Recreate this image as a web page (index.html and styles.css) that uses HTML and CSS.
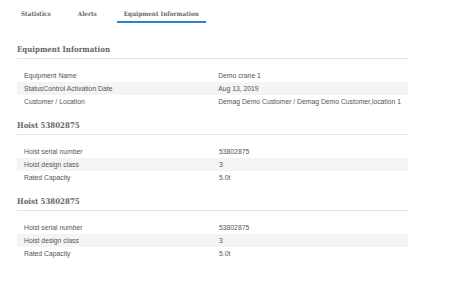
FILE: index.html
```html
<!DOCTYPE html>
<html lang="en">
<head>
  <meta charset="UTF-8">
  <title>Equipment Information</title>
  <link rel="stylesheet" href="styles.css">
</head>
<body>
  <div class="tabs">
    <div class="tab">Statistics</div>
    <div class="tab">Alerts</div>
    <div class="tab active">Equipment Information</div>
  </div>

  <div class="content">
    <!-- Equipment -->
    <div class="section">
      <h2>Equipment Information</h2>
      <table>
        <tr><td>Equipment Name</td><td>Demo crane 1</td></tr>
        <tr><td>StatusControl Activation Date</td><td>Aug 13, 2019</td></tr>
        <tr><td>Customer / Location</td><td>Demag Demo Customer / Demag Demo Customer,location 1</td></tr>
      </table>
    </div>

    <!-- Hoists -->
    <div class="section">
      <h2>Hoist 53802875</h2>
      <table>
        <tr><td>Hoist serial number</td><td>53802875</td></tr>
        <tr><td>Hoist design class</td><td>3</td></tr>
        <tr><td>Rated Capacity</td><td>5.0t</td></tr>
      </table>
    </div>

    <div class="section">
      <h2>Hoist 53802875</h2>
      <table>
        <tr><td>Hoist serial number</td><td>53802875</td></tr>
        <tr><td>Hoist design class</td><td>3</td></tr>
        <tr><td>Rated Capacity</td><td>5.0t</td></tr>
      </table>
    </div>
  </div>
</body>
</html>
```

FILE: styles.css
```css
body {
  margin: 0;
  background: #fff;
  font-family: "Liberation Sans", Arial, sans-serif;
  color: #444;
}
.tabs {
  display: flex;
  padding: 6px 0 0 14px;
}
.tab {
  font-family: "DejaVu Serif Condensed", "DejaVu Serif", serif;
  font-stretch: condensed;
  font-size: 6.3px;
  font-weight: bold;
  color: #666;
  padding: 4px 7px 4px 7px;
  margin-right: 13px;
  border-bottom: 2px solid transparent;
}
.tab.active {
  border-bottom-color: #2a7fd0;
}
.content {
  padding: 22px 42px 0 17px;
}
.section {
  margin-bottom: 13px;
}
h2 {
  font-family: "DejaVu Serif Condensed", "DejaVu Serif", serif;
  font-stretch: condensed;
  font-size: 7.8px;
  font-weight: bold;
  color: #666;
  margin: 0;
  padding-bottom: 4px;
  border-bottom: 1px solid #e2e2e2;
}
table {
  border-collapse: collapse;
  width: 100%;
  margin-top: 10px;
}
td {
  font-size: 6.8px;
  color: #555;
  padding: 0 7px;
  height: 13px;
  white-space: nowrap;
}
td:first-child {
  width: 181px;
}
tr:nth-child(even) td {
  background: #f4f4f4;
}
```
